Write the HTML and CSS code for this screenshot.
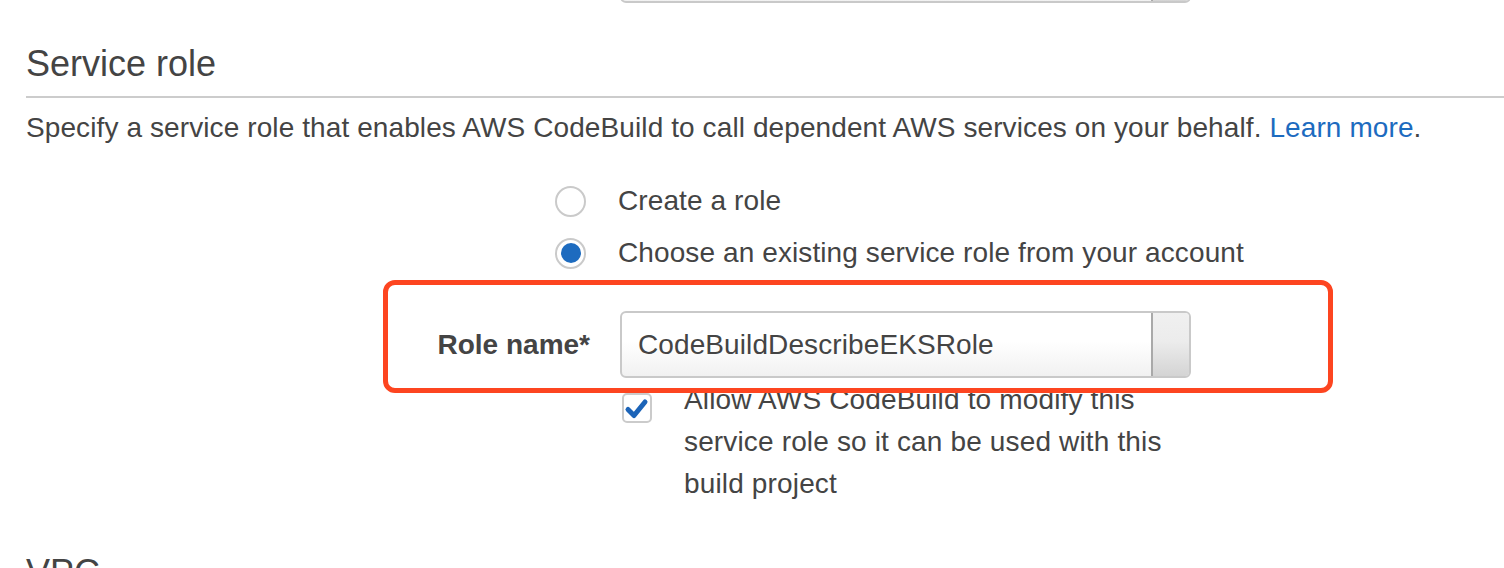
FILE: index.html
```html
<!DOCTYPE html>
<html>
<head>
<meta charset="utf-8">
<link rel="stylesheet" href="styles.css">
</head>
<body>
<div class="page">
  <div class="prev-row">
    <div class="select"><span class="select-value"></span><span class="select-btn"></span></div>
  </div>

  <h2 class="section-title">Service role</h2>
  <p class="section-desc">Specify a service role that enables AWS CodeBuild to call dependent AWS services on your behalf. <a class="link" href="#">Learn more</a>.</p>

  <div class="radios">
    <label class="radio-row"><span class="radio"></span><span class="radio-label">Create a role</span></label>
    <label class="radio-row"><span class="radio radio-on"><span class="radio-dot"></span></span><span class="radio-label">Choose an existing service role from your account</span></label>
  </div>

  <div class="field-row">
    <div class="field-label">Role name*</div>
    <div class="select"><span class="select-value">CodeBuildDescribeEKSRole</span><span class="select-btn"></span></div>
  </div>

  <div class="check-row">
    <span class="checkbox">
      <svg width="26" height="26" viewBox="0 0 26 26"><path d="M4 14.5 L10 20.5 L21 7" fill="none" stroke="#1c64b8" stroke-width="5" stroke-linecap="round" stroke-linejoin="round"/></svg>
    </span>
    <span class="check-label">Allow AWS CodeBuild to modify this service role so it can be used with this build project</span>
  </div>

  <h2 class="section-title vpc">VPC</h2>

  <div class="annotation"></div>
</div>
</body>
</html>
```

FILE: styles.css
```css
html, body {
  margin: 0;
  padding: 0;
  background: #ffffff;
}

body {
  font-family: "Liberation Sans", Arial, Helvetica, sans-serif;
  color: #444444;
  overflow: hidden;
}

.page {
  position: relative;
  padding-left: 26px;
  height: 568px;
  overflow: hidden;
}

.prev-row {
  margin-left: 594px;
  margin-top: -64px;
}

.select {
  box-sizing: border-box;
  width: 571px;
  height: 67px;
  border: 2px solid #c9c9c9;
  border-radius: 6px;
  background: linear-gradient(#ffffff 0%, #ffffff 45%, #f1f1f1 100%);
  display: flex;
  align-items: stretch;
  overflow: hidden;
}

.select-value {
  flex: 1;
  display: flex;
  align-items: center;
  padding-left: 16px;
  font-size: 28px;
  letter-spacing: 0.1px;
  color: #444;
}

.select-btn {
  width: 36px;
  border-left: 2px solid #a9a9a9;
  background: linear-gradient(#f0f0f0 0%, #ececec 45%, #d4d4d4 100%);
}

.section-title {
  margin: 39px 0 0 0;
  font-size: 36px;
  line-height: 44px;
  font-weight: normal;
  color: #444;
  padding-bottom: 10px;
  border-bottom: 2px solid #cccccc;
}

.section-title.vpc {
  border-bottom: none;
  margin-top: 46px;
}

.section-desc {
  margin: 12px 0 0 0;
  font-size: 28px;
  line-height: 36px;
  letter-spacing: 0.1px;
}

.link {
  color: #1d6bbf;
  text-decoration: none;
}

.radios {
  margin-top: 29px;
  margin-left: 529px;
  display: flex;
  flex-direction: column;
}

.radio-row {
  display: flex;
  align-items: center;
  height: 52px;
  font-size: 28px;
  line-height: 52px;
  letter-spacing: 0.1px;
}

.radio {
  box-sizing: border-box;
  width: 31px;
  height: 31px;
  border: 2px solid #cacaca;
  border-radius: 50%;
  background: #fff;
  margin-right: 32px;
  display: flex;
  align-items: center;
  justify-content: center;
  flex-shrink: 0;
}

.radio-dot {
  width: 20px;
  height: 20px;
  border-radius: 50%;
  background: #1d6bbf;
}

.field-row {
  margin-top: 32px;
  display: grid;
  grid-template-columns: 564px 571px;
  column-gap: 30px;
  align-items: center;
}

.field-label {
  text-align: right;
  font-weight: bold;
  font-size: 28px;
  line-height: 36px;
}

.check-row {
  margin-top: 1px;
  margin-left: 596px;
  display: flex;
  align-items: flex-start;
}

.checkbox {
  box-sizing: border-box;
  width: 30px;
  height: 30px;
  margin-top: 14px;
  border: 2px solid #cbcbcb;
  border-radius: 5px;
  background: #fff;
  display: flex;
  align-items: center;
  justify-content: center;
  flex-shrink: 0;
  margin-right: 32px;
}

.check-label {
  width: 500px;
  font-size: 28px;
  line-height: 42px;
  letter-spacing: 0.15px;
}

.annotation {
  position: absolute;
  left: 383px;
  top: 280px;
  width: 950px;
  height: 113px;
  box-sizing: border-box;
  border: 5px solid #fd4520;
  border-radius: 12px;
}
```
